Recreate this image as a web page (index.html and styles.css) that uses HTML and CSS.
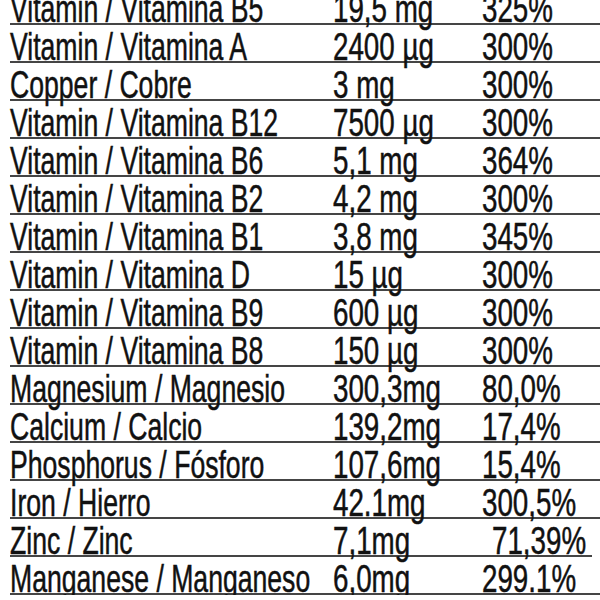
FILE: index.html
```html
<!DOCTYPE html>
<html>
<head>
<meta charset="utf-8">
<link rel="stylesheet" href="styles.css">
</head>
<body>
<div class="table">
  <div class="row"><span class="c1"><span class="t">Vitamin / Vitamina B5</span></span><span class="c2"><span class="t">19,5 mg</span></span><span class="c3"><span class="t">325%</span></span></div>
  <div class="row"><span class="c1"><span class="t">Vitamin / Vitamina A</span></span><span class="c2"><span class="t">2400 µg</span></span><span class="c3"><span class="t">300%</span></span></div>
  <div class="row"><span class="c1"><span class="t">Copper / Cobre</span></span><span class="c2"><span class="t">3 mg</span></span><span class="c3"><span class="t">300%</span></span></div>
  <div class="row"><span class="c1"><span class="t">Vitamin / Vitamina B12</span></span><span class="c2"><span class="t">7500 µg</span></span><span class="c3"><span class="t">300%</span></span></div>
  <div class="row"><span class="c1"><span class="t">Vitamin / Vitamina B6</span></span><span class="c2"><span class="t">5,1 mg</span></span><span class="c3"><span class="t">364%</span></span></div>
  <div class="row"><span class="c1"><span class="t">Vitamin / Vitamina B2</span></span><span class="c2"><span class="t">4,2 mg</span></span><span class="c3"><span class="t">300%</span></span></div>
  <div class="row"><span class="c1"><span class="t">Vitamin / Vitamina B1</span></span><span class="c2"><span class="t">3,8 mg</span></span><span class="c3"><span class="t">345%</span></span></div>
  <div class="row"><span class="c1"><span class="t">Vitamin / Vitamina D</span></span><span class="c2"><span class="t">15 µg</span></span><span class="c3"><span class="t">300%</span></span></div>
  <div class="row"><span class="c1"><span class="t">Vitamin / Vitamina B9</span></span><span class="c2"><span class="t">600 µg</span></span><span class="c3"><span class="t">300%</span></span></div>
  <div class="row"><span class="c1"><span class="t">Vitamin / Vitamina B8</span></span><span class="c2"><span class="t">150 µg</span></span><span class="c3"><span class="t">300%</span></span></div>
  <div class="row"><span class="c1"><span class="t">Magnesium / Magnesio</span></span><span class="c2"><span class="t">300,3mg</span></span><span class="c3"><span class="t">80,0%</span></span></div>
  <div class="row"><span class="c1"><span class="t">Calcium / Calcio</span></span><span class="c2"><span class="t">139,2mg</span></span><span class="c3"><span class="t">17,4%</span></span></div>
  <div class="row"><span class="c1"><span class="t">Phosphorus / Fósforo</span></span><span class="c2"><span class="t">107,6mg</span></span><span class="c3"><span class="t">15,4%</span></span></div>
  <div class="row"><span class="c1"><span class="t">Iron / Hierro</span></span><span class="c2"><span class="t">42.1mg</span></span><span class="c3"><span class="t">300,5%</span></span></div>
  <div class="row short"><span class="c1"><span class="t">Zinc / Zinc</span></span><span class="c2"><span class="t">7,1mg</span></span><span class="c3 shift"><span class="t">71,39%</span></span></div>
  <div class="row"><span class="c1"><span class="t">Manganese / Manganeso</span></span><span class="c2"><span class="t">6,0mg</span></span><span class="c3"><span class="t">299.1%</span></span></div>
</div>
</body>
</html>
```
FILE: styles.css
```css
html, body {
  margin: 0;
  padding: 0;
  background: #ffffff;
  overflow: hidden;
}

.table {
  margin-top: -13px;
  margin-left: 10px;
  font-family: "Liberation Sans", Arial, sans-serif;
  font-size: 38px;
  color: #111111;
}

.row {
  display: grid;
  grid-template-columns: 323px 149px 1fr;
  height: 28px;
  padding-top: 8px;
  line-height: 28px;
  border-bottom: 2px solid #454545;
  white-space: nowrap;
}

.row.short {
  margin-right: 8px;
}

.c1, .c2, .c3 {
  min-width: 0;
}

.t {
  display: inline-block;
  transform: scaleX(0.73);
  transform-origin: 0 50%;
  -webkit-text-stroke: 0.5px #111111;
}

.c1 .t {
  transform: scaleX(0.70);
}

.shift {
  padding-left: 10px;
}
```
